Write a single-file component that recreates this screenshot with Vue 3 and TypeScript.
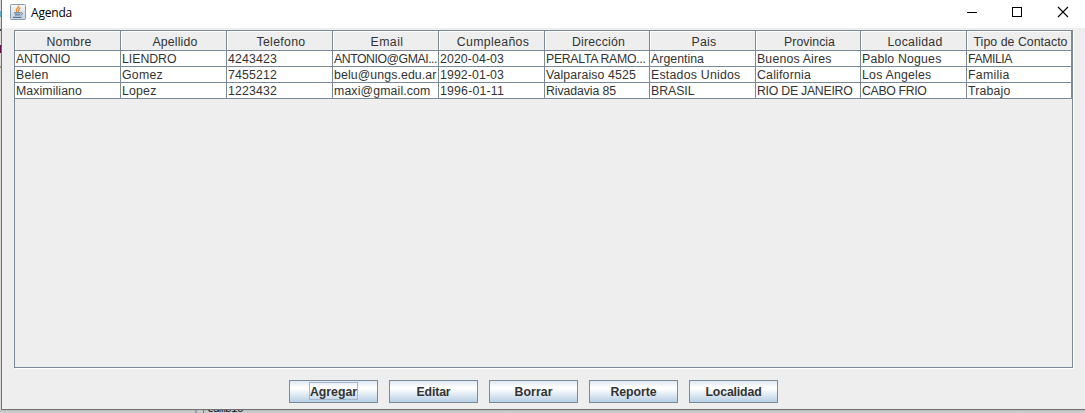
<script setup lang="ts">
import { nextTick, onMounted, ref } from 'vue'

interface Label { text: string; width: number }
interface Column { title: Label; size: number; cells: Label[] }

const l = (text: string, width: number): Label => ({ text, width })

const columns: Column[] = [
  { title: l('Nombre', 45), size: 106, cells: [l('ANTONIO', 54), l('Belen', 32.5), l('Maximiliano', 66)] },
  { title: l('Apellido', 45), size: 106, cells: [l('LIENDRO', 54.5), l('Gomez', 41), l('Lopez', 34.5)] },
  { title: l('Telefono', 49), size: 106, cells: [l('4243423', 49), l('7455212', 49), l('1223432', 49)] },
  { title: l('Email', 33), size: 106, cells: [l('ANTONIO@GMAI...', 103), l('belu@ungs.edu.ar', 102.5), l('maxi@gmail.com', 96.5)] },
  { title: l('Cumpleaños', 72.5), size: 106, cells: [l('2020-04-03', 64), l('1992-01-03', 64), l('1996-01-11', 64)] },
  { title: l('Dirección', 53), size: 105, cells: [l('PERALTA RAMO...', 99.5), l('Valparaiso 4525', 90), l('Rivadavia 85', 70)] },
  { title: l('Pais', 25), size: 106, cells: [l('Argentina', 53), l('Estados Unidos', 89.5), l('BRASIL', 43.5)] },
  { title: l('Provincia', 51), size: 105, cells: [l('Buenos Aires', 74.5), l('California', 54), l('RIO DE JANEIRO', 95.5)] },
  { title: l('Localidad', 55), size: 106, cells: [l('Pablo Nogues', 79.5), l('Los Angeles', 69.5), l('CABO FRIO', 64.5)] },
  { title: l('Tipo de Contacto', 94), size: 105, cells: [l('FAMILIA', 44), l('Familia', 41.5), l('Trabajo', 42.5)] },
]
const buttons: Label[] = [l('Agregar', 47), l('Editar', 34), l('Borrar', 38), l('Reporte', 46), l('Localidad', 56)]
const tracks = columns.map((c) => c.size + 'px').join(' ')

const spacing = ref<Record<string, string>>({})
const root = ref<HTMLElement | null>(null)

// Tune tracking so that every label takes its designed width.
onMounted(async () => {
  await nextTick()
  const result: Record<string, string> = {}
  root.value?.querySelectorAll<HTMLElement>('[data-key]').forEach((el) => {
    const natural = el.getBoundingClientRect().width
    const count = (el.textContent ?? '').length
    result[el.dataset.key as string] = ((Number(el.dataset.width) - natural) / count).toFixed(3) + 'px'
  })
  spacing.value = result
})
</script>

<template>
  <div ref="root" class="desktop">
    <div class="edge"><i class="m1" /><i class="m2" /><i class="m3" /><i class="m4" /></div>
    <div class="window">
      <header class="titlebar">
        <svg class="java" width="16" height="16" viewBox="0 0 16 16">
          <defs>
            <linearGradient id="tile" x1="0" y1="0" x2="0" y2="1">
              <stop offset="0" stop-color="#f8fafb" /><stop offset="1" stop-color="#c3d0dc" />
            </linearGradient>
          </defs>
          <rect x=".5" y=".5" width="15" height="15" rx=".8" fill="url(#tile)" stroke="#8a9cae" />
          <path d="M8.600 1.600C9.200 3.800 4.600 4.600 7 7.800M10.600 3.700C7.600 5 9.600 5.900 8.200 7.800" fill="none" stroke="#ee8a35" stroke-width="1.400" />
          <path d="M4 8.900h6.600M4.800 10.900h5.200M3 13.300h8.500" fill="none" stroke="#56789a" stroke-width="1.200" />
          <path d="M10.800 8.700c2.500-.4 2.300 2-.3 2.500" fill="none" stroke="#56789a" />
        </svg>
        <span class="title"><span data-key="app" data-width="41" :style="{ letterSpacing: spacing.app }">Agenda</span></span>
        <svg class="controls" width="104" height="12" viewBox="0 0 104 12" fill="none" stroke="#000">
          <path d="M0 6.500h10M45.500 1.500h9v9h-9z" shape-rendering="crispEdges" />
          <path d="M91 1l10 10M101 1l-10 10" stroke-width="1.1" />
        </svg>
      </header>
      <main class="pane">
        <div class="table" :style="{ gridTemplateColumns: tracks }">
          <div v-for="(c, i) in columns" :key="i" class="column">
            <div class="head"><span :data-key="'h' + i" :data-width="c.title.width" :style="{ letterSpacing: spacing['h' + i] }">{{ c.title.text }}</span></div>
            <div v-for="(cell, j) in c.cells" :key="j" class="cell">
              <span :data-key="'c' + i + '-' + j" :data-width="cell.width" :style="{ letterSpacing: spacing['c' + i + '-' + j] }">{{ cell.text }}</span>
            </div>
          </div>
        </div>
      </main>
      <footer class="actions">
        <button v-for="(b, i) in buttons" :key="b.text" :class="{ focused: i === 0 }">
          <span class="ring"><span :data-key="'b' + i" :data-width="b.width" :style="{ letterSpacing: spacing['b' + i] }">{{ b.text }}</span></span>
        </button>
      </footer>
    </div>
    <div class="behind"><div class="ruler" /><span class="code">cambio</span></div>
  </div>
</template>

<style>
body { margin: 0; overflow: hidden; }
</style>

<style scoped>
.desktop {
  width: 1085px; height: 413px; overflow: hidden; box-sizing: border-box;
  display: grid; grid-template: 410px 3px / 1px 1084px;
  background: #e2e2e2; font: 12.3px/16px "Liberation Sans", Arial, sans-serif; color: #333;
}
.edge { display: flex; flex-direction: column; background: #d9d9d9; }
.edge i { height: 2px; }
.m1 { margin-top: 11px; height: 6px !important; background: #5daed8; }
.m2 { margin-top: 12px; background: #444; }
.m3 { margin-top: 14px; height: 8px !important; background: #650c45; }
.m4 { margin-top: 13px; background: #a99b73; }
.window {
  display: flex; flex-direction: column; box-sizing: border-box; height: 410px;
  border-left: 1px solid #707070; border-bottom: 1px solid #707070; background: #eee;
}
.titlebar { height: 28px; flex: none; display: flex; align-items: flex-start; background: #fff; color: #000; }
.java { margin: 4px 0 0 8px; }
.title { margin: 5px 0 0 5px; font: 12px/16px "Open Sans", "Noto Sans", sans-serif; }
.title span { display: inline-block; }
.controls { margin: 6px 14px 0 auto; }
.pane {
  flex: none; box-sizing: border-box; width: 1059px; height: 338px; margin: 2px 0 0 12px;
  border: 1px solid #7a8a99; box-shadow: 1px 1px 0 #fff;
}
.table { display: grid; width: 1057px; }
.column { min-width: 0; }
.head, .cell { box-sizing: border-box; border-right: 1px solid #7a8a99; border-bottom: 1px solid #7a8a99; white-space: pre; }
.head {
  height: 20px; display: flex; justify-content: center; line-height: 20px; padding: 1px 0 0 3px;
  box-shadow: inset 1px 1px 0 #fff;
}
.cell { height: 16px; padding-left: 1px; background: #fff; line-height: 16px; }
.cell span { display: inline-block; }
.actions { display: flex; gap: 11px; margin: 12px 0 0 287px; }
button {
  width: 89px; height: 23px; box-sizing: border-box; padding: 0; border: 1px solid #7a8a99; border-radius: 0;
  display: flex; justify-content: center; align-items: flex-start;
  background: linear-gradient(#dde8f3 0%, #fff 30%, #fff 36%, #b8cfe5 100%);
  font: bold 12.3px/16px "Liberation Sans", Arial, sans-serif; color: #333;
}
.ring { box-sizing: border-box; height: 18px; margin: 1px 0 0; border: 1px solid transparent; line-height: 18px; white-space: pre; }
.ring span { display: inline-block; }
.focused .ring { border-color: #a3b8cc; }
.behind {
  grid-column: 1 / 3; display: flex; overflow: hidden; height: 3px;
  background: linear-gradient(#bbb, #d2d2d2);
}
.ruler { width: 6px; height: 3px; margin-left: 195px; border-right: 1px solid #777; border-left: 2px solid #929bad; background: #c8c8c8; }
.code { margin: -8px 0 0 3px; font: 11px/13px "DejaVu Sans Mono", monospace; color: #111; height: 13px; letter-spacing: -.6px; }
</style>
